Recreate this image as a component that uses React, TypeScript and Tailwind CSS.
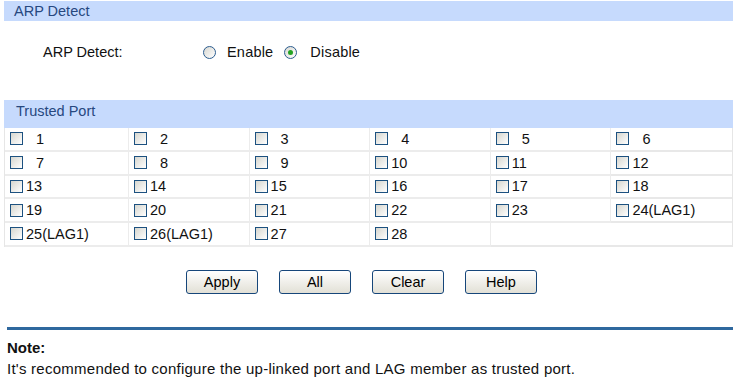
const font = { fontFamily: '"Liberation Sans", Arial, sans-serif' };

const ports = Array.from({ length: 28 }, (_, i) => {
  const n = i + 1;
  return n >= 24 && n <= 26 ? `${n}(LAG1)` : `${n}`;
});

function Box() {
  return (
    <span className="inline-block w-[13px] h-[13px] shrink-0 border border-[#1c5180] bg-linear-to-br from-[#d6d6cf] to-white" />
  );
}

function Radio({ checked }: { checked?: boolean }) {
  return (
    <span className="flex w-[13px] h-[13px] shrink-0 items-center justify-center rounded-full border border-[#2c5d8f] bg-linear-to-br from-[#d8d8d2] to-white">
      {checked && <span className="w-[5px] h-[5px] rounded-full bg-[#23a323]" />}
    </span>
  );
}

function Btn({ label }: { label: string }) {
  return (
    <button className="w-[72px] h-[24px] rounded-[3px] border border-[#16467a] bg-linear-to-b from-white to-[#e2e0d6] text-black leading-[18px]">
      {label}
    </button>
  );
}

export default function App() {
  return (
    <div className="w-[739px] h-[385px] bg-white text-[14.5px] leading-[18px] text-[#111] overflow-hidden" style={font}>
      <div className="pt-[1px] pl-[4px] w-[733px]">
        <div className="h-[20px] flex items-center pl-[10px] bg-[#c6dafd] text-[#27487f]">ARP Detect</div>
        <div className="h-[79px] pt-[22px]">
          <div className="h-[18px] flex items-center">
            <span className="w-[199px] pl-[39px]">ARP Detect:</span>
            <Radio />
            <span className="ml-[11px] tracking-[0.2px]">Enable</span>
            <span className="ml-[11px]">
              <Radio checked />
            </span>
            <span className="ml-[13px] tracking-[0.2px]">Disable</span>
          </div>
        </div>

        <div className="h-[28px] pl-[12px] pt-[2px] bg-[#c6dafd] text-[#27487f]">Trusted Port</div>
        <div className="grid grid-cols-[124px_repeat(5,1fr)] auto-rows-[23.75px] border-x border-[#e6e6e6]">
          {ports.map((p, i) => (
            <div
              key={p}
              className={
                i % 6 === 5
                  ? "flex items-center pl-[5px] border-b-2 border-[#e8e8e8]"
                  : "flex items-center pl-[5px] border-b-2 border-r border-[#ececec]"
              }
            >
              <Box />
              <span className={p.length === 1 ? "ml-[13px]" : "ml-[3px]"}>{p}</span>
            </div>
          ))}
          <div className="col-span-2 border-b-2 border-[#e8e8e8]" />
        </div>

        <div className="pt-[23px] flex justify-center gap-[21px] pr-[14px]">
          <Btn label="Apply" />
          <Btn label="All" />
          <Btn label="Clear" />
          <Btn label="Help" />
        </div>

        <div className="mt-[33px] ml-[3px] h-[3px] bg-[#2f689e]" />
        <div className="ml-[3px] pt-[9px] font-bold text-[15px]">Note:</div>
        <div className="ml-[3px] pt-[3px] text-[15px] tracking-[0.25px]">
          It's recommended to configure the up-linked port and LAG member as trusted port.
        </div>
      </div>
    </div>
  );
}
